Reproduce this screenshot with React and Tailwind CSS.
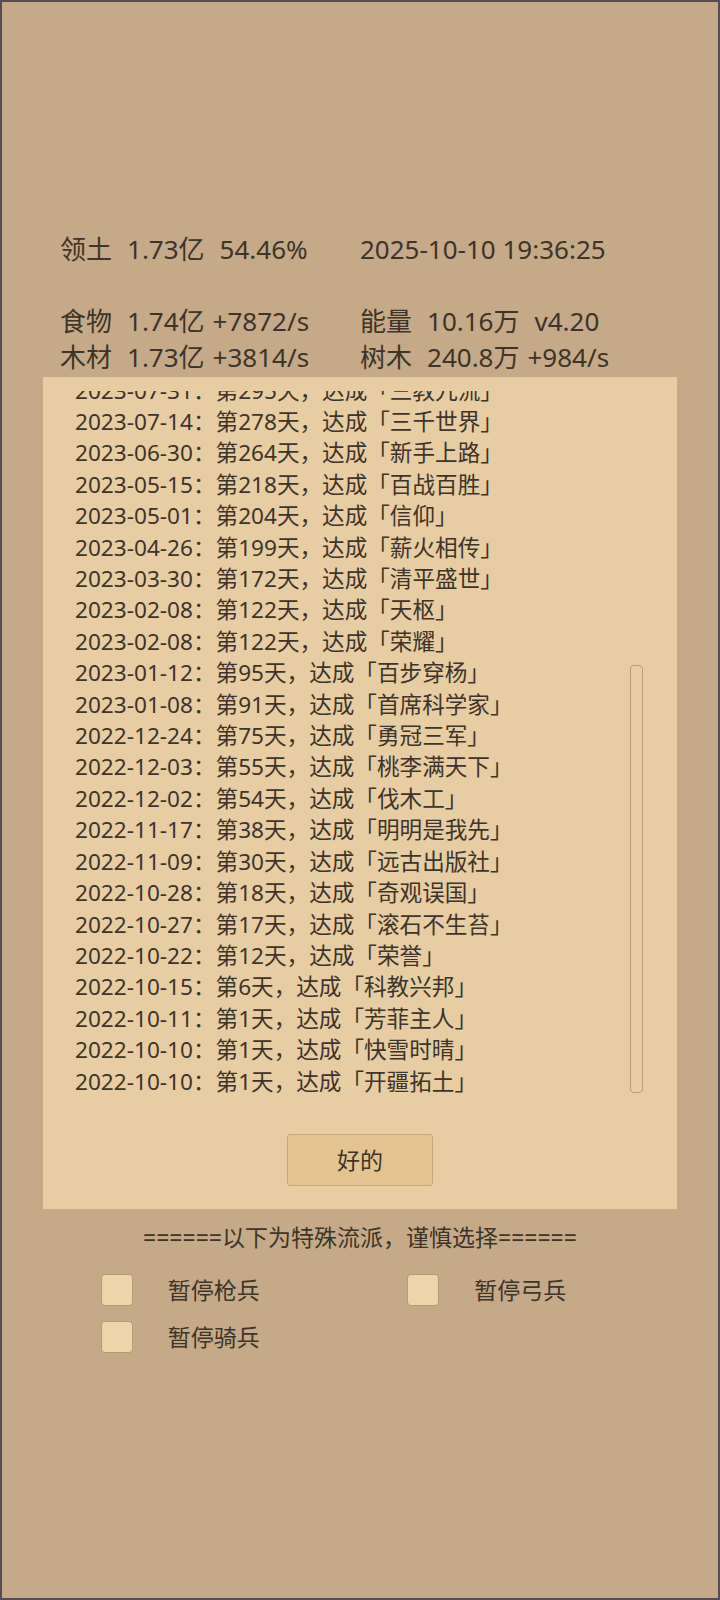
import React from "react";

const rows = [
  "2023-07-31：第295天，达成「三教九流」",
  "2023-07-14：第278天，达成「三千世界」",
  "2023-06-30：第264天，达成「新手上路」",
  "2023-05-15：第218天，达成「百战百胜」",
  "2023-05-01：第204天，达成「信仰」",
  "2023-04-26：第199天，达成「薪火相传」",
  "2023-03-30：第172天，达成「清平盛世」",
  "2023-02-08：第122天，达成「天枢」",
  "2023-02-08：第122天，达成「荣耀」",
  "2023-01-12：第95天，达成「百步穿杨」",
  "2023-01-08：第91天，达成「首席科学家」",
  "2022-12-24：第75天，达成「勇冠三军」",
  "2022-12-03：第55天，达成「桃李满天下」",
  "2022-12-02：第54天，达成「伐木工」",
  "2022-11-17：第38天，达成「明明是我先」",
  "2022-11-09：第30天，达成「远古出版社」",
  "2022-10-28：第18天，达成「奇观误国」",
  "2022-10-27：第17天，达成「滚石不生苔」",
  "2022-10-22：第12天，达成「荣誉」",
  "2022-10-15：第6天，达成「科教兴邦」",
  "2022-10-11：第1天，达成「芳菲主人」",
  "2022-10-10：第1天，达成「快雪时晴」",
  "2022-10-10：第1天，达成「开疆拓土」",
];

function Check({ label }) {
  return (
    <div className="flex items-center h-[32px]">
      <div className="w-[32px] h-[32px] rounded-[4px] border border-[#b59b72] bg-[#ecd5aa]" />
      <span className="ml-[35px] text-[23px] leading-[32px]">{label}</span>
    </div>
  );
}

function Stat({ a, b, c, wide }) {
  return (
    <div className="flex">
      <span>{a}</span>
      <span className="ml-[15px]">{b}</span>
      <span className={wide ? "ml-[15px]" : "ml-[8px]"}>{c}</span>
    </div>
  );
}

export default function App() {
  return (
    <div
      className="w-[720px] h-[1600px] border-2 border-[#505050] bg-[#c4aa88] text-[#3d342a] overflow-hidden"
      style={{ fontFamily: '"Noto Sans", "Noto Sans CJK SC", sans-serif' }}
    >
      {/* header stats */}
      <div className="pt-[229px] pl-[58px] text-[26px] leading-[36px] whitespace-pre">
        <div className="grid grid-cols-[300px_1fr]">
          <Stat a="领土" b="1.73亿" c="54.46%" wide />
          <div>2025-10-10 19:36:25</div>
          <div>&nbsp;</div>
          <div>&nbsp;</div>
          <Stat a="食物" b="1.74亿" c="+7872/s" />
          <Stat a="能量" b="10.16万" c="v4.20" wide />
          <Stat a="木材" b="1.73亿" c="+3814/s" />
          <Stat a="树木" b="240.8万" c="+984/s" />
        </div>
      </div>

      {/* achievements panel */}
      <div className="relative mt-[2px] mx-[41px] bg-[#e6cda4] pt-[14px] pb-[23px]">
        <div className="h-[706px] overflow-hidden pl-[32px]">
          <div className="-mt-[16.4px] text-[22.6px] leading-[31.4px] whitespace-pre">
            {rows.map((r, i) => (
              <div key={i}>{r}</div>
            ))}
          </div>
        </div>
        <div className="absolute left-[587px] top-[288px] w-[13px] h-[428px] rounded-[4px] border border-[#b89c74] bg-[#e8cfa6]" />
        <div className="mt-[37px] flex justify-center">
          <button className="w-[146px] h-[52px] rounded-[3px] border border-[#c8a878] bg-[#e3c491] text-[23px] text-[#3d342a]">
            好的
          </button>
        </div>
      </div>

      {/* special options */}
      <div className="mt-[12px] text-center text-[23px] leading-[32px] whitespace-pre">
        ======以下为特殊流派，谨慎选择======
      </div>
      <div className="mt-[21px] pl-[98.7px] grid grid-cols-[306.6px_1fr] gap-y-[14.7px]">
        <Check label="暂停枪兵" />
        <Check label="暂停弓兵" />
        <Check label="暂停骑兵" />
      </div>
    </div>
  );
}
